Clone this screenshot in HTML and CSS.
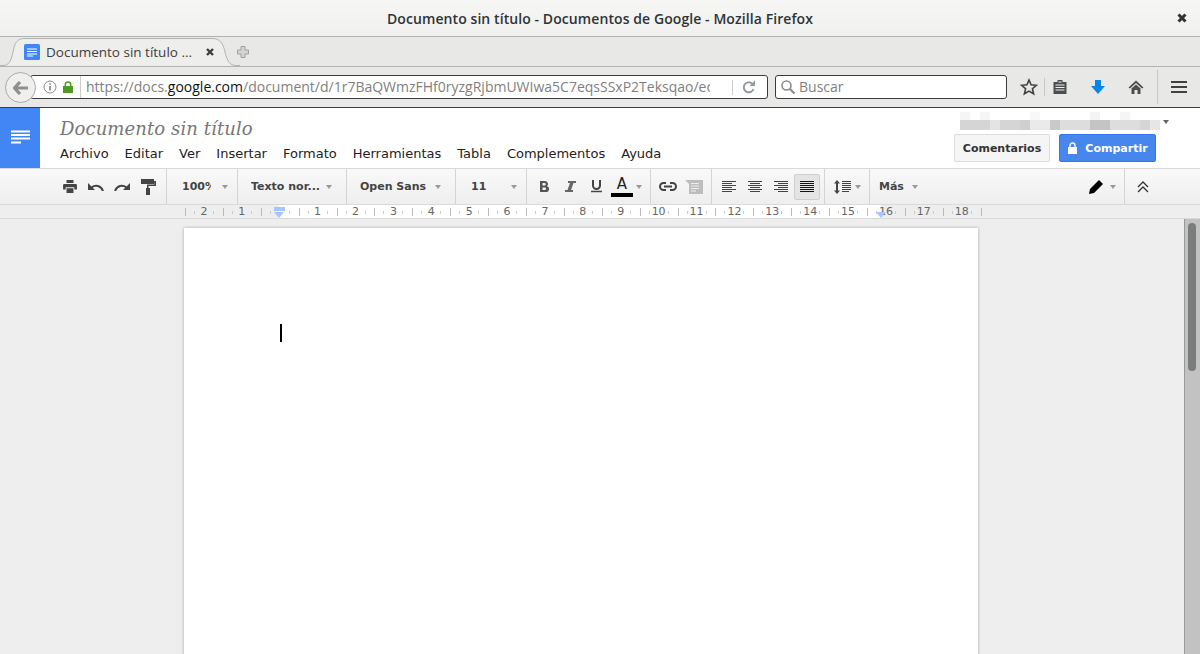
FILE: index.html
```html
<!DOCTYPE html>
<html lang="es">
<head>
    <meta charset="UTF-8">
    <title>Documento sin título - Documentos de Google - Mozilla Firefox</title>
    <link rel="stylesheet" href="styles.css">
</head>
<body>
    <!-- firefox -->
    <div class="titlebar">
        <span class="window-title">Documento sin título - Documentos de Google - Mozilla Firefox</span>
        <svg class="window-close" width="12" height="12" viewBox="0 0 12 12"><path d="M2.5 2.5l7 7M9.5 2.5l-7 7" stroke="#2e3436" stroke-width="3"/></svg>
    </div>
    <div class="tabbar">
        <div class="tab">
            <svg class="tab-shape" width="240" height="30" viewBox="0 0 240 30"><path d="M-2 28.5H3C9 28.500 11 24 13 15 14.500 6 17 1.500 25 1.500H212C220 1.500 223 6 225 15 227 24 230 28.500 236 28.500H240" fill="#eeeeec" stroke="#b4b4b2"/></svg>
            <svg class="tab-icon" width="16" height="16" viewBox="0 0 16 16"><rect width="16" height="16" rx="1.500" fill="#4285f4"/><path d="M3 5h10M3 7.500h10M3 10h10M3 12h6" stroke="#fff"/></svg>
            <span class="tab-label">Documento sin título ...</span>
            <svg class="tab-close" width="10" height="10" viewBox="0 0 10 10"><path d="M2 2l6 6M8 2l-6 6" stroke="#3d3f41" stroke-width="2.400"/></svg>
        </div>
        <svg class="new-tab" width="14" height="14" viewBox="0 0 14 14"><path d="M5 1.500h4v3.500h3.500v4H9v3.500H5V9H1.500V5H5z" fill="#d4d4d2" stroke="#a0a09e"/></svg>
    </div>
    <div class="navbar">
        <div class="back">
            <svg width="16" height="14" viewBox="0 0 16 14"><path d="M7 1L1.500 7 7 13M2 7h13" fill="none" stroke="#8f8f8d" stroke-width="3.200"/></svg>
        </div>
        <div class="urlbar">
            <svg class="url-info" width="14" height="14" viewBox="0 0 14 14"><circle cx="7" cy="7" r="6" fill="none" stroke="#8a8a8a"/><path d="M7 6v4.500M7 3.300v1.500" stroke="#777" stroke-width="1.500"/></svg>
            <svg class="url-lock" width="12" height="12" viewBox="0 0 12 12"><path d="M1 5h10v7H1z" fill="#4d9a26"/><path d="M3.300 5.500V3.800a2.700 2.700 0 0 1 5.400 0v1.700" fill="none" stroke="#4d9a26" stroke-width="1.500"/></svg>
            <span class="url-text">https://docs.<b>google.com</b>/document/d/1r7BaQWmzFHf0ryzgRjbmUWIwa5C7eqsSSxP2Teksqao/ec</span>
            <svg class="url-reload" width="14" height="14" viewBox="0 0 14 14"><path d="M11.500 8.500A5 5 0 1 1 10.200 3.200" fill="none" stroke="#8d9aa5" stroke-width="2"/><path d="M7.500 5.500h5.500V0z" fill="#8d9aa5"/></svg>
        </div>
        <div class="searchbar">
            <svg width="16" height="16" viewBox="0 0 16 16"><circle cx="6.500" cy="6.500" r="4.500" fill="none" stroke="#8c8c8c" stroke-width="1.600"/><path d="M10 10l4.500 4.500" stroke="#8c8c8c" stroke-width="2.200"/></svg>
            <span>Buscar</span>
        </div>
        <div class="nav-icons">
            <svg class="ni-star" width="18" height="18" viewBox="0 0 18 18"><path d="M9 2l2.100 4.800 5.200.5-3.900 3.400 1.200 5.100L9 13.100l-4.600 2.700 1.200-5.100-3.900-3.400 5.200-.5z" fill="none" stroke="#3f4142" stroke-width="1.600"/></svg>
            <i class="nav-sep"></i>
            <svg class="ni-list" width="16" height="16" viewBox="0 0 16 16"><path d="M1.500 3h4V1h5v2h4v12h-13z" fill="#4b4d4e"/><path d="M3.500 6h9M3.500 8.500h9M3.500 11h9M6.500 3h3" stroke="#eee"/></svg>
            <svg class="ni-down" width="16" height="16" viewBox="0 0 16 16"><path d="M5 1h6v6h4l-7 8-7-8h4z" fill="#0a84e8"/></svg>
            <svg class="ni-home" width="16" height="16" viewBox="0 0 16 16"><path d="M8 1.500L0.500 8.500 2 9.500 8 4l6 5.500 1.500-1z" fill="#4b4d4e"/><path d="M3.500 9.500L8 5.500l4.500 4V15H9.500v-4h-3v4h-3z" fill="#4b4d4e"/></svg>
            <i class="nav-sep nav-sep-tall"></i>
            <svg class="ni-menu" width="16" height="14" viewBox="0 0 16 14"><path d="M0 2h16M0 7h16M0 12h16" stroke="#3f4142" stroke-width="2.200"/></svg>
        </div>
    </div>

    <!-- docs -->
    <header class="docs-header">
        <div class="docs-logo">
            <svg width="20" height="14" viewBox="0 0 20 14"><path d="M1 1.500h19M1 5h19M1 8.500h19M1 12.500h10" stroke="#fff" stroke-width="1.800"/></svg>
        </div>
        <div class="docs-main">
            <div class="docs-title">Documento sin título</div>
            <nav class="docs-menu">
                <span>Archivo</span>
                <span>Editar</span>
                <span>Ver</span>
                <span>Insertar</span>
                <span>Formato</span>
                <span>Herramientas</span>
                <span>Tabla</span>
                <span>Complementos</span>
                <span>Ayuda</span>
            </nav>
        </div>
        <div class="docs-right">
            <div class="account">
                <div class="blur">
                    <i class="blur-top"></i>
                    <i class="blur-bottom"></i>
                </div>
                <i class="caret caret-dark"></i>
            </div>
            <div class="docs-buttons">
                <span class="btn">Comentarios</span>
                <span class="btn btn-blue">
                    <svg width="11" height="12" viewBox="0 0 11 12"><path d="M1 5h9v7H1z" fill="#fff"/><path d="M3 5.500V3.500a2.500 2.500 0 0 1 5 0v2" fill="none" stroke="#fff" stroke-width="1.400"/></svg>
                    Compartir
                </span>
            </div>
        </div>
    </header>

    <div class="toolbar">
        <div class="tgroup g-history">
            <span class="tbtn"><svg width="14" height="13" viewBox="0 0 16 15"><path d="M4 0h8v3.500H4zM1.500 4.500h13A1.500 1.500 0 0 1 16 6v5h-3V8.500H3V11H0V6a1.500 1.500 0 0 1 1.500-1.500zM4 9.500h8V15H4z" fill="#444"/></svg></span>
            <span class="tbtn"><svg width="16" height="9" viewBox="0 0 16 9"><path d="M15 9C13 3.500 7.500 2.500 3.500 5.500" fill="none" stroke="#444" stroke-width="2"/><path d="M0 1v7h7z" fill="#444"/></svg></span>
            <span class="tbtn"><svg width="16" height="9" viewBox="0 0 16 9"><path d="M1 9C3 3.500 8.500 2.500 12.500 5.500" fill="none" stroke="#444" stroke-width="2"/><path d="M16 1v7H9z" fill="#444"/></svg></span>
            <span class="tbtn"><svg width="15" height="16" viewBox="0 0 15 16"><path d="M0 0h13v5H0zM13 2h2v5H7.500v2H9v7H5V9h1V5.500h7.500V7z" fill="#444"/></svg></span>
        </div>
        <div class="tgroup g-zoom"><span class="drop-label w-zoom">100%</span><i class="caret"></i></div>
        <div class="tgroup g-style"><span class="drop-label w-style">Texto nor...</span><i class="caret"></i></div>
        <div class="tgroup g-font"><span class="drop-label w-font">Open Sans</span><i class="caret"></i></div>
        <div class="tgroup g-size"><span class="drop-label w-size">11</span><i class="caret"></i></div>
        <div class="tgroup g-format">
            <span class="tbtn"><svg width="10" height="11" viewBox="0 0 10 11"><path d="M1 0h5a3 3 0 0 1 2 5.200A3 3 0 0 1 6.500 11H1zM3.500 2v2.500H5.500a1.250 1.250 0 0 0 0-2.500zM3.500 6.500V9h2.300a1.250 1.250 0 0 0 0-2.500z" fill="#555" fill-rule="evenodd"/></svg></span>
            <span class="tbtn"><svg width="11" height="11" viewBox="0 0 11 11"><path d="M3 0h8v2H8.500L6 9h2v2H0V9h2.500L5 2H3z" fill="#666"/></svg></span>
            <span class="tbtn"><svg width="11" height="13" viewBox="0 0 11 13"><path d="M2 0v5.500a3.500 3.500 0 0 0 7 0V0" fill="none" stroke="#444" stroke-width="2"/><path d="M0 11.500h11" stroke="#444" stroke-width="1.500"/></svg></span>
            <span class="tbtn color-btn"><span class="color-a">A</span><i class="color-bar"></i></span>
            <i class="caret caret-a"></i>
        </div>
        <div class="tgroup g-insert">
            <span class="tbtn"><svg width="18" height="9" viewBox="0 0 18 9"><path d="M7 1H4.500a3.500 3.500 0 0 0 0 7H7M11 1h2.500a3.500 3.500 0 0 1 0 7H11M5 4.500h8" fill="none" stroke="#444" stroke-width="2"/></svg></span>
            <span class="tbtn"><svg width="18" height="14" viewBox="0 0 18 14"><path d="M0 0h18v14H4V4z" fill="#bdbdbd"/><path d="M6 3.500h8M6 6h8M6 8.500h8M6 11h5" stroke="#eee"/></svg></span>
        </div>
        <div class="tgroup g-align">
            <span class="tbtn"><svg class="align" width="14" height="11" viewBox="0 0 14 11"><path d="M0 .5h14M0 2.500h10M0 4.500h14M0 6.500h10M0 8.500h14M0 10.500h10"/></svg></span>
            <span class="tbtn"><svg class="align" width="14" height="11" viewBox="0 0 14 11"><path d="M0 .5h14M2 2.500h10M0 4.500h14M2 6.500h10M0 8.500h14M2 10.500h10"/></svg></span>
            <span class="tbtn"><svg class="align" width="14" height="11" viewBox="0 0 14 11"><path d="M0 .5h14M4 2.500h10M0 4.500h14M4 6.500h10M0 8.500h14M4 10.500h10"/></svg></span>
            <span class="tbtn tbtn-on"><svg class="align align-on" width="14" height="11" viewBox="0 0 14 11"><path d="M0 .5h14M0 2.500h14M0 4.500h14M0 6.500h14M0 8.500h14M0 10.500h14"/></svg></span>
        </div>
        <div class="tgroup g-spacing">
            <svg class="align" width="17" height="14" viewBox="0 0 17 14"><path d="M8 1.500h9M8 3.500h9M8 5.500h9M8 7.500h9M8 9.500h9M8 11.500h7"/><path class="align-arrow" d="M3 0L6 3.500H4V10.500H6L3 14 0 10.500H2V3.500H0z"/></svg>
            <i class="caret caret-spacing"></i>
        </div>
        <div class="tgroup g-more"><span class="drop-label">Más</span><i class="caret"></i></div>
        <div class="tgroup g-mode">
            <svg width="14" height="14" viewBox="0 0 14 14"><path d="M10 0L14 4 5 13 0 14l1-5z" fill="#000"/></svg>
            <i class="caret"></i>
        </div>
        <div class="tgroup g-collapse">
            <svg width="12" height="12" viewBox="0 0 12 12"><path d="M1 6l5-5 5 5M1 11l5-5 5 5" fill="none" stroke="#333" stroke-width="1.300"/></svg>
        </div>
    </div>

    <div class="ruler">
        <div class="ruler-track">
            <span>2</span><span>1</span><span></span><span>1</span><span>2</span><span>3</span><span>4</span>
            <span>5</span><span>6</span><span>7</span><span>8</span><span>9</span><span>10</span><span>11</span>
            <span>12</span><span>13</span><span>14</span><span>15</span><span>16</span><span>17</span><span>18</span>
            <span></span>
        </div>
        <i class="indent-bar"></i>
        <i class="indent-arrow arrow-left"></i>
        <i class="indent-arrow arrow-right"></i>
    </div>

    <div class="workspace">
        <div class="canvas">
            <div class="page"><i class="cursor"></i></div>
        </div>
        <div class="scrollbar"><i class="thumb"></i></div>
    </div>
</body>
</html>
```

FILE: styles.css
```css
html, body {
    margin: 0;
    height: 654px;
    overflow: hidden;
}
body {
    display: flex;
    flex-direction: column;
    background: #eee;
    font-family: "DejaVu Sans", sans-serif;
}
i {
    display: block;
}
svg {
    display: block;
    flex: none;
}

/* firefox */
.titlebar {
    height: 36px;
    flex: none;
    display: flex;
    align-items: center;
    justify-content: center;
    position: relative;
    background: linear-gradient(#f6f6f5, #f0f0ef);
    border-bottom: 1px solid #b2b2b0;
}
.window-title {
    font-family: "Open Sans", sans-serif;
    font-weight: 600;
    font-size: 14px;
    letter-spacing: 0.08px;
    color: #2e3436;
}
.window-close {
    position: absolute;
    right: 12px;
    top: 12px;
}
.tabbar {
    height: 29px;
    flex: none;
    display: flex;
    align-items: center;
    background: #e8e8e6;
    border-bottom: 1px solid #b4b4b2;
}
.tab {
    position: relative;
    width: 228px;
    height: 29px;
    display: flex;
    align-items: center;
    padding: 1px 0 0 24px;
    box-sizing: border-box;
}
.tab-shape {
    position: absolute;
    left: 0;
    top: 0;
    overflow: visible;
}
.tab-icon, .tab-label, .tab-close {
    position: relative;
}
.tab-label {
    margin-left: 6px;
    width: 159px;
    font-family: "Open Sans", sans-serif;
    font-size: 13.500px;
    color: #3d3f41;
    white-space: nowrap;
}
.new-tab {
    margin-left: 8px;
}
.navbar {
    height: 40px;
    flex: none;
    display: flex;
    align-items: center;
    position: relative;
    background: #e8e8e6;
    border-bottom: 1px solid #3a3d3e;
    padding-left: 30px;
}
.back {
    position: absolute;
    left: 5px;
    top: 5px;
    width: 29px;
    height: 29px;
    display: flex;
    align-items: center;
    justify-content: center;
    border: 1px solid #a9a9a7;
    border-radius: 50%;
    background: #efefed;
    z-index: 1;
}
.urlbar, .searchbar {
    height: 22px;
    display: flex;
    align-items: center;
    background: #fff;
    border: 1px solid #3a3d3e;
    border-radius: 3px;
    font-family: "Open Sans", sans-serif;
    font-size: 14px;
    color: #7f7f7f;
}
.urlbar {
    width: 736px;
}
.url-info {
    margin-left: 12px;
}
.url-lock {
    margin-left: 5px;
}
.url-text {
    width: 624px;
    margin-left: 6px;
    padding-left: 5px;
    border-left: 1px solid #ccc;
    overflow: hidden;
    white-space: nowrap;
    line-height: 22px;
    height: 22px;
}
.url-text b {
    font-weight: 400;
    color: #111;
}
.url-reload {
    margin-left: 22px;
    padding-left: 9px;
    border-left: 1px solid #ccc;
    height: 15px;
}
.searchbar {
    width: 226px;
    margin-left: 7px;
    padding-left: 4px;
    gap: 3px;
}
.searchbar span {
    margin-top: -2px;
}
.nav-icons {
    display: flex;
    align-items: center;
    height: 34px;
}
.ni-star {
    margin-left: 13px;
}
.nav-sep {
    width: 1px;
    height: 18px;
    margin-left: 6px;
    background: #c8c8c6;
}
.nav-sep-tall {
    height: 34px;
    margin-left: 13px;
}
.ni-list {
    margin-left: 7px;
}
.ni-down {
    margin-left: 22px;
}
.ni-home {
    margin-left: 22px;
}
.ni-menu {
    margin-left: 13px;
}

/* docs header */
.docs-header {
    height: 60px;
    flex: none;
    display: flex;
    background: #fff;
    border-bottom: 1px solid #d9d9d9;
}
.docs-logo {
    width: 40px;
    background: #4285f4;
    display: flex;
    justify-content: center;
    padding-top: 22px;
    box-sizing: border-box;
}
.docs-main {
    flex: 1;
    padding-left: 20px;
}
.docs-title {
    margin-top: 9px;
    font-family: "DejaVu Serif", serif;
    font-style: italic;
    font-size: 18px;
    letter-spacing: 0.1px;
    line-height: 24px;
    color: #777;
}
.docs-menu {
    display: flex;
    gap: 16px;
    margin-top: 5px;
    font-size: 13px;
    line-height: 16px;
    color: #222;
}
.docs-right {
    width: 246px;
    display: flex;
    flex-direction: column;
}
.account {
    display: flex;
    align-items: center;
    height: 26px;
    padding-left: 6px;
}
.blur {
    width: 200px;
    height: 18px;
}
.blur-top {
    height: 8px;
    background: linear-gradient(90deg, #f5f5f5 0 10px, #fff 10px 20px, #f5f5f5 20px 30px, #fff 30px 70px, #f8f8f8 70px 80px, #fff 80px 130px, #f3f3f3 130px 140px, #fff 140px 160px, #f5f5f5 160px 170px, #fff 170px);
}
.blur-bottom {
    height: 10px;
    background: linear-gradient(90deg, #d5d5d5 0 30px, #e4e4e4 30px 40px, #d5d5d5 40px 60px, #cfcfcf 60px 70px, #eaeaea 70px 90px, #c9c9c9 90px 100px, #dddddd 100px 130px, #c4c4c4 130px 150px, #dddddd 150px 180px, #d5d5d5 180px 190px, #e6e6e6 190px);
}
.docs-buttons {
    display: flex;
    gap: 9px;
}
.btn {
    display: flex;
    align-items: center;
    justify-content: center;
    gap: 7px;
    width: 96px;
    height: 28px;
    box-sizing: border-box;
    background: #f5f5f5;
    border: 1px solid #dcdcdc;
    border-radius: 2px;
    font-size: 11px;
    font-weight: 700;
    color: #333;
}
.btn-blue {
    width: 97px;
    background: #4787ed;
    border-color: #3079ed;
    color: #fff;
}

/* toolbar */
.toolbar {
    height: 36px;
    flex: none;
    display: flex;
    background: linear-gradient(#f9f9f9, #eeeeee);
    border-bottom: 1px solid #dadada;
    box-sizing: border-box;
    font-size: 11px;
    font-weight: 700;
    color: #444;
}
.tgroup {
    display: flex;
    align-items: center;
    box-sizing: border-box;
    border-right: 1px solid #d4d4d4;
    flex: none;
}
.tbtn {
    width: 26px;
    height: 26px;
    flex: none;
    display: flex;
    align-items: center;
    justify-content: center;
    box-sizing: border-box;
}
.tbtn-on {
    background: #e4e4e4;
    border: 1px solid #cfcfcf;
    border-radius: 2px;
}
.drop-label {
    display: block;
    overflow: hidden;
    white-space: nowrap;
}
.caret {
    width: 0;
    height: 0;
    flex: none;
    border-left: 3.500px solid transparent;
    border-right: 3.500px solid transparent;
    border-top: 4px solid #999;
}
.caret-dark {
    margin-left: 3px;
    margin-top: 2px;
    border-top-color: #666;
}
.g-history {
    width: 167px;
    padding-left: 57px;
}
.g-zoom {
    width: 71px;
    padding-left: 15px;
}
.w-zoom {
    width: 29px;
    margin-right: 11px;
}
.g-style {
    width: 109px;
    padding-left: 13px;
}
.w-style {
    width: 75px;
}
.g-font {
    width: 109px;
    padding-left: 13px;
}
.w-font {
    width: 75px;
}
.g-size {
    width: 71px;
    padding-left: 15px;
}
.w-size {
    width: 40px;
}
.g-format {
    width: 124px;
    padding-left: 4px;
}
.color-btn {
    flex-direction: column;
    justify-content: center;
}
.color-a {
    font-size: 15px;
    font-weight: 400;
    line-height: 15px;
    color: #222;
}
.color-bar {
    width: 22px;
    height: 4px;
    background: #000;
    margin-top: 1px;
}
.caret-a {
    margin-left: 1px;
}
.g-insert {
    width: 61px;
    padding-left: 4px;
}
.g-align {
    width: 113px;
    padding-left: 4px;
}
.align {
    stroke: #444;
    fill: none;
}
.align-on {
    stroke: #111;
}
.align-arrow {
    fill: #444;
    stroke: none;
}
.g-spacing {
    width: 45px;
    padding-left: 9px;
    gap: 4px;
}
.g-more {
    width: 220px;
    padding-left: 9px;
    gap: 8px;
    border-right: 0;
}
.g-mode {
    width: 36px;
    gap: 7px;
    margin-left: -1px;
}
.g-collapse {
    border-right: 0;
    padding-left: 12px;
}

/* ruler */
.ruler {
    height: 13px;
    flex: none;
    position: relative;
    background: linear-gradient(90deg, transparent 279px, #fff 279px, #fff 881px, transparent 881px);
    border-bottom: 1px solid #dadada;
}
.ruler-track {
    display: flex;
    margin-left: 185px;
    height: 13px;
}
.ruler-track span {
    width: 37.900px;
    flex: none;
    text-align: center;
    font-size: 11px;
    font-weight: 400;
    line-height: 14px;
    color: #666;
    background-image:
        linear-gradient(#bbb, #bbb),
        linear-gradient(#ccc, #ccc),
        linear-gradient(#ccc, #ccc);
    background-size: 1px 8px, 1px 3px, 1px 3px;
    background-repeat: no-repeat;
    background-position: 0 3px, 9px 6px, 28px 6px;
}
.ruler-track span:last-child {
    width: 1px;
}
.indent-bar {
    position: absolute;
    left: 274px;
    top: 2px;
    width: 11px;
    height: 4px;
    background: #a6c5fa;
}
.indent-arrow {
    position: absolute;
    top: 7px;
    width: 0;
    height: 0;
    border-left: 5.500px solid transparent;
    border-right: 5.500px solid transparent;
    border-top: 6px solid #a6c5fa;
}
.arrow-left {
    left: 274px;
}
.arrow-right {
    left: 876px;
}

/* document */
.workspace {
    flex: 1;
    display: flex;
    min-height: 0;
}
.canvas {
    flex: 1;
    padding: 9px 0 0 184px;
    overflow: hidden;
}
.page {
    width: 794px;
    height: 700px;
    background: #fff;
    box-shadow: 0 0 3px rgba(0, 0, 0, 0.3);
    padding: 96px 0 0 96px;
    box-sizing: border-box;
}
.cursor {
    width: 2px;
    height: 18px;
    background: #000;
}
.scrollbar {
    width: 16px;
    flex: none;
    background: #c2c2c2;
    border-left: 1px solid #999;
    padding: 4px 0 0 3px;
    box-sizing: border-box;
}
.thumb {
    width: 8px;
    height: 148px;
    border-radius: 4px;
    background: #7b7d7d;
}
```
